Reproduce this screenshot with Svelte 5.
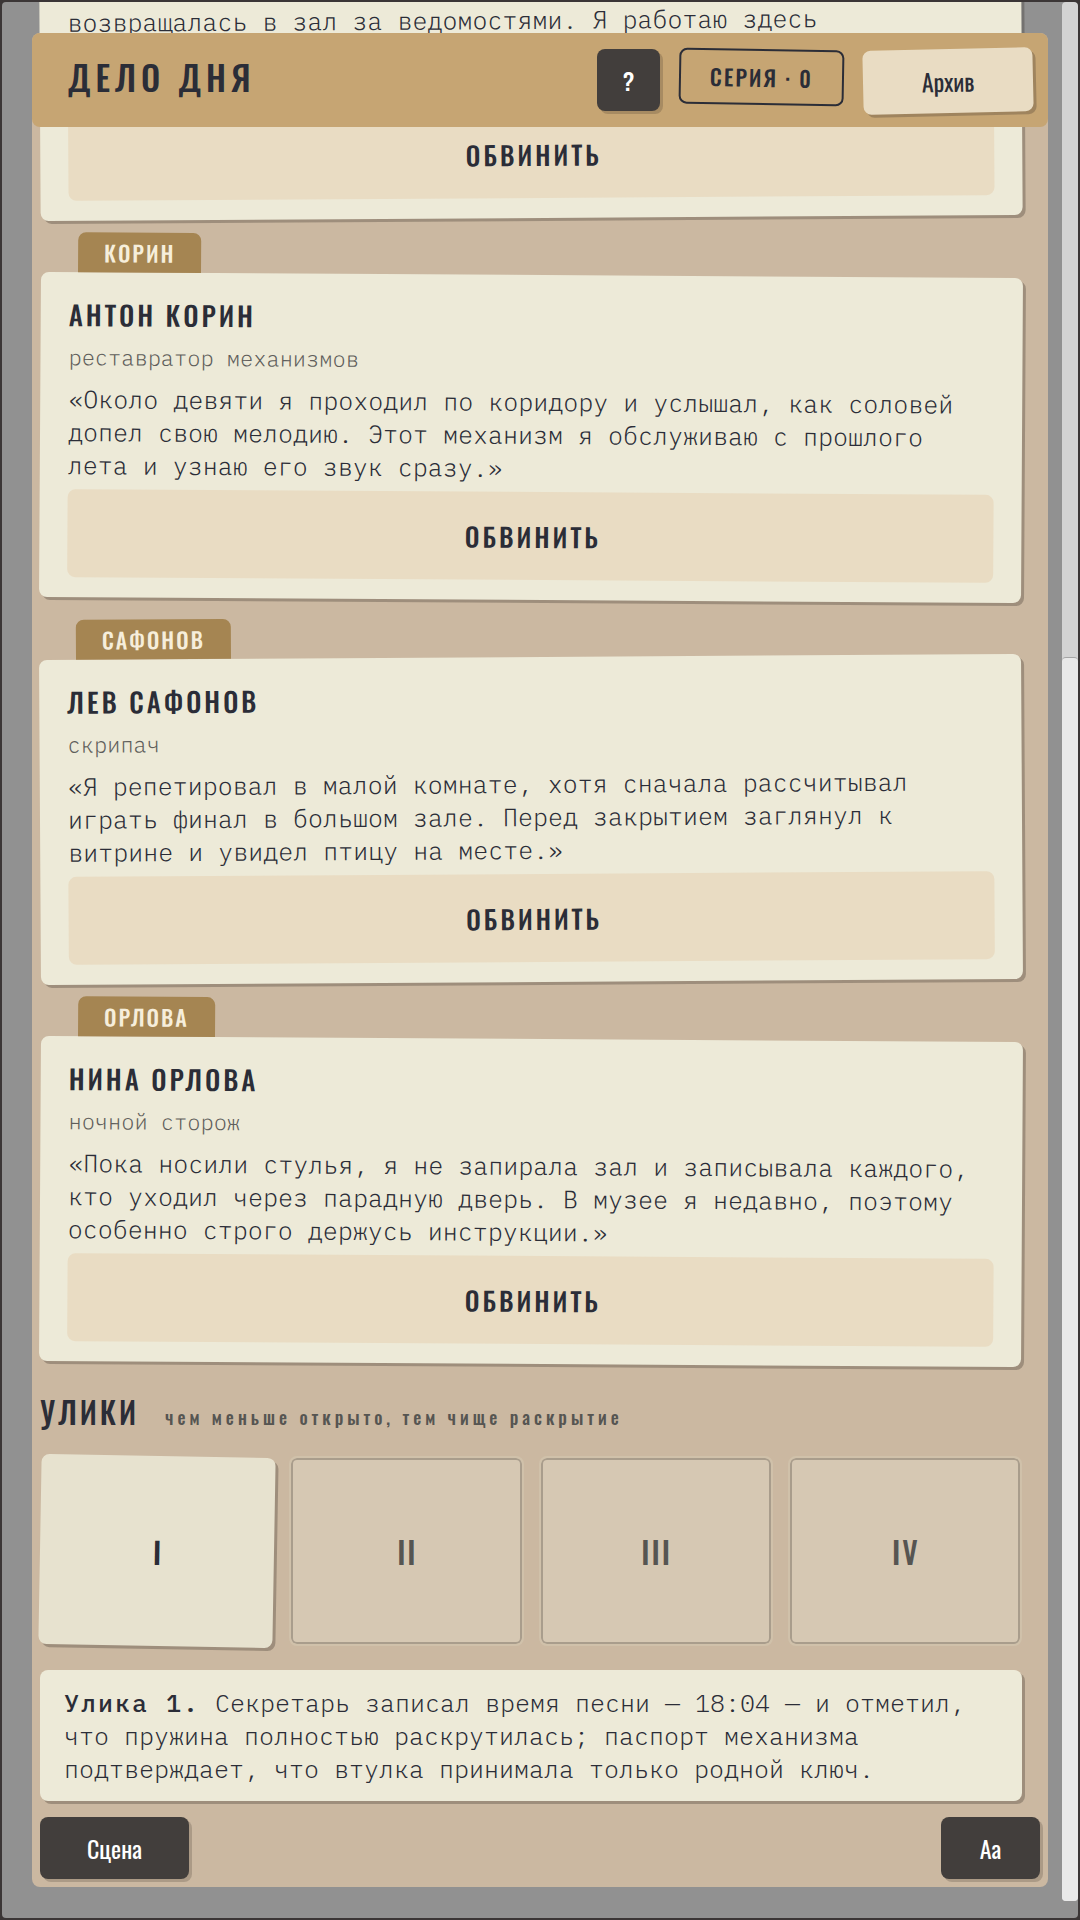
<script>
	let series = 0;
	let openClues = [1];
	const numerals = ["I", "II", "III", "IV"];

	const suspects = [
		{
			tab: "Корин",
			name: "Антон Корин",
			role: "реставратор механизмов",
			quote: "«Около девяти я проходил по коридору и услышал, как соловей допел свою мелодию. Этот механизм я обслуживаю с прошлого лета и узнаю его звук сразу.»"
		},
		{
			tab: "Сафонов",
			name: "Лев Сафонов",
			role: "скрипач",
			quote: "«Я репетировал в малой комнате, хотя сначала рассчитывал играть финал в большом зале. Перед закрытием заглянул к витрине и увидел птицу на месте.»"
		},
		{
			tab: "Орлова",
			name: "Нина Орлова",
			role: "ночной сторож",
			quote: "«Пока носили стулья, я не запирала зал и записывала каждого, кто уходил через парадную дверь. В музее я недавно, поэтому особенно строго держусь инструкции.»"
		}
	];
</script>

<div class="screen">
	<div class="desk">
		<main class="panel">
			<header class="topbar">
				<h1>Дело дня</h1>
				<button class="dark help">?</button>
				<div class="series">Серия · {series}</div>
				<button class="archive">Архив</button>
			</header>

			<div class="content">
				<section class="suspects">
					<article class="card passed">
						<p class="quote">возвращалась в зал за ведомостями. Я работаю здесь</p>
						<button class="accuse">Обвинить</button>
					</article>
					{#each suspects as person}
						<article class="card">
							<span class="tab">{person.tab}</span>
							<h2>{person.name}</h2>
							<p class="role">{person.role}</p>
							<p class="quote">{person.quote}</p>
							<button class="accuse">Обвинить</button>
						</article>
					{/each}
				</section>

				<div class="heading">
					<h2>Улики</h2>
					<span>чем меньше открыто, тем чище раскрытие</span>
				</div>

				<div class="clues">
					{#each numerals as numeral, i}
						<button class="clue" class:open={openClues.includes(i + 1)}>{numeral}</button>
					{/each}
				</div>

				<p class="note">
					<strong>Улика 1.</strong> Секретарь записал время песни — 18:04 — и отметил, что пружина полностью раскрутилась; паспорт механизма подтверждает, что втулка принимала только родной ключ.
				</p>
			</div>

			<footer>
				<button class="dark scene">Сцена</button>
				<button class="dark size">Аа</button>
			</footer>
		</main>

		<div class="scroll">
			<div class="rest"></div>
			<div class="thumb"></div>
		</div>
	</div>
</div>

<style>
	:global(body) {
		background: #3b3636;
		color: #2b2d37;
		font-family: Oswald, "Liberation Sans Narrow", "Roboto Condensed", "DejaVu Sans Condensed", sans-serif;
	}
	* {
		box-sizing: border-box;
	}
	h1, h2, p {
		margin: 0;
	}
	button {
		font-family: inherit;
		color: inherit;
		border: none;
		border-radius: 8px;
		padding: 0;
		cursor: pointer;
	}
	.screen {
		min-height: 100vh;
		padding: 2px;
		display: flex;
	}
	.desk {
		flex: 1;
		display: flex;
		gap: 14px;
		padding-left: 30px;
		background: #919191;
		border-radius: 4px;
		overflow: hidden;
	}
	.panel {
		flex: 1;
		min-width: 0;
		margin: 31px 0;
		background: #cbb8a1;
		border-radius: 8px;
	}
	.topbar {
		position: relative;
		z-index: 2;
		display: flex;
		align-items: flex-start;
		gap: 19px;
		height: 94px;
		padding: 16px 15px 0 36px;
		background: #c6a573;
		border-radius: 8px;
	}
	h1 {
		flex: 1;
		font-size: 34px;
		line-height: 56px;
		font-weight: 500;
		letter-spacing: 5px;
		text-transform: uppercase;
	}
	.dark {
		height: 62px;
		background: #423e3c;
		color: #fff;
		font-size: 24px;
		font-weight: 400;
		box-shadow: 3px 3px 0 rgba(43, 35, 30, 0.2);
	}
	.help {
		width: 63px;
		font-weight: 500;
	}
	.series {
		width: 165px;
		height: 56px;
		line-height: 52px;
		border: 2px solid #2b2d37;
		border-radius: 8px;
		text-align: center;
		font-size: 22px;
		font-weight: 500;
		letter-spacing: 2px;
		text-transform: uppercase;
		transform: rotate(1deg);
	}
	.archive {
		width: 170px;
		height: 64px;
		background: #e9dcc3;
		font-size: 24px;
		box-shadow: 3px 3px 0 rgba(43, 35, 30, 0.25);
		transform: rotate(-1.3deg);
	}
	.content {
		padding: 0 26px 0 8px;
	}
	/* the list is scrolled up, its first card passes under the top bar */
	.suspects {
		display: flex;
		flex-direction: column;
		gap: 57px;
		margin-top: -128px;
	}
	.card {
		position: relative;
		display: flex;
		flex-direction: column;
		gap: 8px;
		padding: 24px 28px 20px;
		background: #edead8;
		border-radius: 8px;
		box-shadow: 3px 3px 0 rgba(43, 35, 30, 0.28);
		transform: rotate(-0.35deg);
	}
	.card:nth-child(even) {
		transform: rotate(0.35deg);
	}
	.passed {
		gap: 74px;
		padding-top: 4px;
		border-top-left-radius: 0;
		border-top-right-radius: 0;
	}
	.tab {
		position: absolute;
		left: 37px;
		bottom: 100%;
		padding: 0 26px;
		background: #a58552;
		color: #f6eedb;
		border-radius: 8px 8px 0 0;
		font-size: 22px;
		line-height: 40px;
		font-weight: 500;
		letter-spacing: 2px;
		text-transform: uppercase;
	}
	h2 {
		font-size: 27px;
		line-height: 36px;
		font-weight: 500;
		letter-spacing: 3px;
		text-transform: uppercase;
	}
	.role, .quote, .note {
		font-family: "IBM Plex Mono", "Liberation Mono", monospace;
		font-weight: 300;
	}
	.role {
		font-size: 22px;
		line-height: 34px;
		color: #5f5e5b;
	}
	.quote, .note {
		font-size: 25px;
		line-height: 33px;
	}
	.accuse {
		height: 88px;
		padding-left: 5px;
		background: #e9dcc3;
		font-size: 26px;
		font-weight: 500;
		letter-spacing: 3px;
		text-transform: uppercase;
	}
	.heading {
		display: flex;
		align-items: baseline;
		gap: 26px;
		margin: 30px 0 26px;
	}
	.heading h2 {
		font-size: 30px;
	}
	.heading span {
		font-size: 18px;
		line-height: 24px;
		font-weight: 500;
		letter-spacing: 4px;
		color: #565552;
	}
	.clues {
		display: grid;
		grid-template-columns: repeat(4, 1fr);
		gap: 15px;
	}
	.clue {
		height: 190px;
		padding-left: 2px;
		background: #d6c8b3;
		border: 2px solid #d0c1aa;
		box-shadow: inset 0 0 0 2px #a99d8c;
		color: #565552;
		font-size: 30px;
		font-weight: 500;
		letter-spacing: 2px;
	}
	.clue.open {
		background: #e7e2cf;
		border: none;
		color: #2b2d37;
		box-shadow: 3px 3px 0 rgba(43, 35, 30, 0.28);
		transform: rotate(1deg);
	}
	.note {
		margin-top: 24px;
		padding: 16px 24px;
		background: #edead8;
		border-radius: 8px;
		box-shadow: 3px 3px 0 rgba(43, 35, 30, 0.28);
	}
	strong {
		font-weight: 500;
		letter-spacing: 2px;
	}
	footer {
		display: flex;
		justify-content: space-between;
		padding: 16px 8px 8px;
	}
	.scene {
		width: 149px;
	}
	.size {
		width: 99px;
	}
	.scroll {
		width: 16px;
		display: flex;
		flex-direction: column;
		margin-bottom: 17px;
		background: #d3d3d3;
		border-radius: 4px;
	}
	.rest {
		flex: 655;
	}
	.thumb {
		flex: 1244;
		background: #e9e9e9;
		border-top: 1px solid #a5a5a5;
		border-radius: 4px;
	}
</style>
